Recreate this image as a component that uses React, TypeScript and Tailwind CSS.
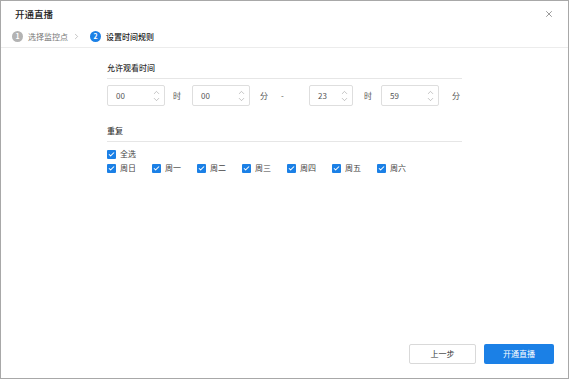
import { X, ChevronRight, ChevronUp, ChevronDown, Check } from "lucide-react";

const FONT = { fontFamily: '"Noto Sans CJK SC", "Noto Sans", sans-serif' };

const DAYS = ["周日", "周一", "周二", "周三", "周四", "周五", "周六"];

function Spinner({ value, w }: { value: string; w: string }) {
  return (
    <div className={`${w} h-[21px] border border-[#dedede] rounded-[2px] flex items-center justify-between pl-[8px] pr-[3px] text-[8px] text-[#555]`}>
      <span>{value}</span>
      <div className="flex flex-col items-center text-[#999] -space-y-[2px]">
        <ChevronUp className="w-[9px] h-[9px]" strokeWidth={1.5} />
        <ChevronDown className="w-[9px] h-[9px]" strokeWidth={1.5} />
      </div>
    </div>
  );
}

function CheckBox({ label }: { label: string }) {
  return (
    <div className="flex items-center gap-[4px] text-[8px] text-[#444] w-[45px]">
      <span className="w-[9px] h-[9px] rounded-[1px] bg-[#1b80e6] flex items-center justify-center">
        <Check className="w-[7px] h-[7px] text-white" strokeWidth={3.5} />
      </span>
      {label}
    </div>
  );
}

export default function App() {
  return (
    <div className="w-[569px] h-[379px] bg-white border border-[#a8a8a8] flex flex-col" style={FONT}>
      {/* Header */}
      <div className="h-[25px] flex items-center justify-between pl-[14px] pr-[14px] pt-[1px]">
        <span className="text-[9.5px] text-[#222] font-medium">开通直播</span>
        <X className="w-[10px] h-[10px] text-[#666]" strokeWidth={1.6} />
      </div>

      {/* Steps */}
      <div className="h-[22px] flex items-center pl-[11px] border-b border-[#ececec] text-[8px]">
        <span className="w-[11px] h-[11px] rounded-full bg-[#b3b3b3] text-white text-[7px] flex items-center justify-center font-bold">1</span>
        <span className="ml-[5px] text-[#777]">选择监控点</span>
        <ChevronRight className="w-[9px] h-[9px] text-[#999] ml-[4px]" strokeWidth={1.5} />
        <span className="ml-[9px] w-[11px] h-[11px] rounded-full bg-[#1b80e6] text-white text-[7px] flex items-center justify-center font-bold">2</span>
        <span className="ml-[5px] text-[#222] font-medium">设置时间规则</span>
      </div>

      {/* Body */}
      <div className="flex-1 pl-[106px] pr-[106px] pt-[14px]">
        <div className="text-[8px] text-[#333] font-medium pb-[4px] border-b border-[#e6e6e6]">允许观看时间</div>
        <div className="flex items-center mt-[6px] text-[8px] text-[#555]">
          <Spinner value="00" w="w-[58px]" />
          <span className="ml-[8px] w-[19px]">时</span>
          <Spinner value="00" w="w-[58px]" />
          <span className="ml-[10px] w-[21px]">分</span>
          <span className="w-[28px]">-</span>
          <Spinner value="23" w="w-[44px]" />
          <span className="ml-[11px] w-[17px]">时</span>
          <Spinner value="59" w="w-[58px]" />
          <span className="ml-[13px]">分</span>
        </div>

        <div className="text-[8px] text-[#333] font-medium pb-[4px] border-b border-[#e6e6e6] mt-[19px]">重复</div>
        <div className="mt-[6px]">
          <CheckBox label="全选" />
        </div>
        <div className="flex mt-[2px]">
          {DAYS.map((d) => (
            <CheckBox key={d} label={d} />
          ))}
        </div>
      </div>

      {/* Footer */}
      <div className="flex justify-end gap-[8px] pr-[14px] pb-[14px] text-[8px]">
        <button className="w-[67px] h-[20px] border border-[#d9d9d9] bg-white text-[#333] rounded-[2px]">上一步</button>
        <button className="w-[70px] h-[20px] bg-[#1b80e6] text-white rounded-[2px]">开通直播</button>
      </div>
    </div>
  );
}
